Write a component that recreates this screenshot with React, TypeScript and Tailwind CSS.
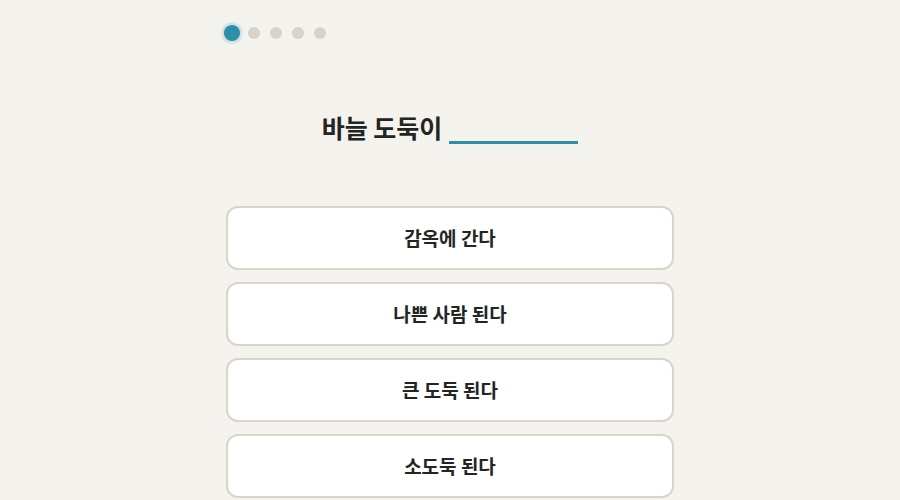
export default function App() {
  const options = ["감옥에 간다", "나쁜 사람 된다", "큰 도둑 된다", "소도둑 된다"];
  return (
    <div
      className="min-h-screen w-full bg-[#f5f3ee] text-[#222622]"
      style={{ fontFamily: '"Noto Sans CJK KR", "Noto Sans", sans-serif' }}
    >
      <div className="mx-auto w-[448px] pt-[27px]">
        <div className="flex items-center gap-[10px]">
          <span className="h-3 w-3 scale-[1.35] rounded-full bg-[#2e8fab] shadow-[0_0_0_2px_rgba(46,143,171,0.15)]" />
          <span className="h-3 w-3 rounded-full bg-[#d7d2ca]" />
          <span className="h-3 w-3 rounded-full bg-[#d7d2ca]" />
          <span className="h-3 w-3 rounded-full bg-[#d7d2ca]" />
          <span className="h-3 w-3 rounded-full bg-[#d7d2ca]" />
        </div>
        <div className="mt-[72px] flex h-8 items-start justify-center gap-[7px]">
          <span className="text-[25px] font-bold leading-8">바늘 도둑이</span>
          <span className="mt-[30px] h-[3px] w-[129px] bg-[#2e8fab]" />
        </div>
        <div className="mt-[63px] flex flex-col gap-3">
          {options.map((o) => (
            <button
              key={o}
              className="flex h-16 w-full items-center justify-center rounded-xl border-2 border-[#d9d4cc] bg-white text-[19px] font-semibold text-[#222622]"
            >
              {o}
            </button>
          ))}
        </div>
      </div>
    </div>
  );
}
